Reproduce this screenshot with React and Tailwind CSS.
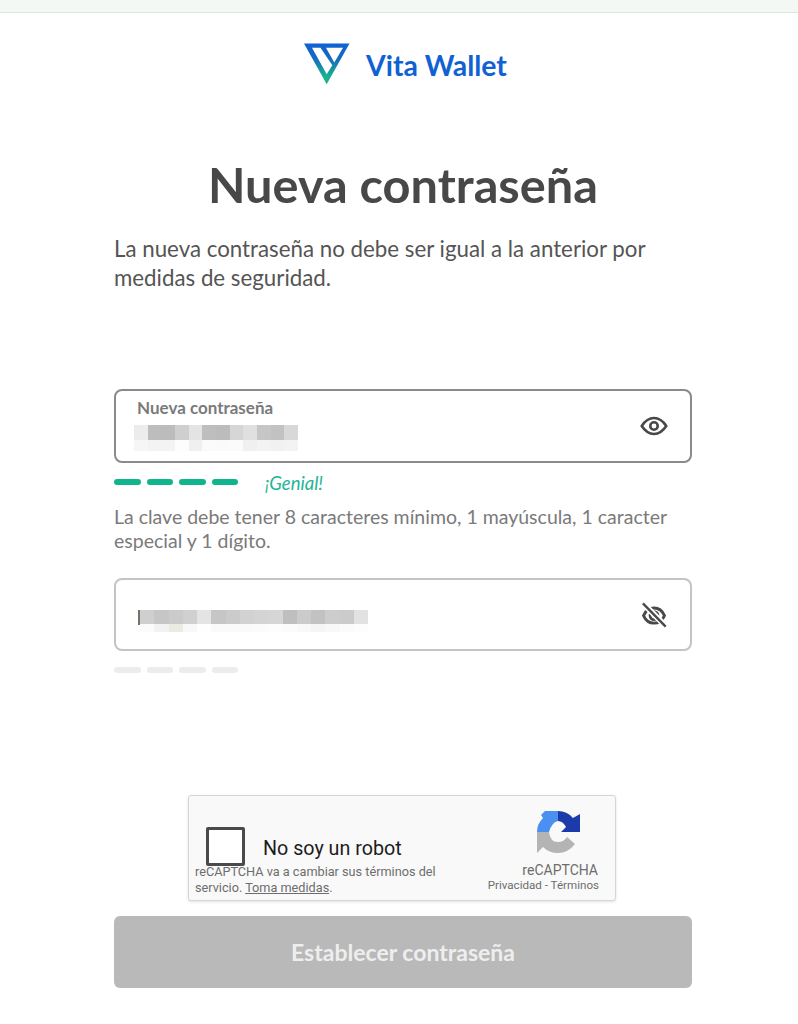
import React from "react";

const lato = "font-['Lato',sans-serif]";

const firstMosaic = [
  ["#ececec", "#bdbdbd", "#bcbcbc", "#cfcfcf", "#e4e4e4", "#bebebe", "#bcbcbc", "#d6d6d6", "#e0e0e0", "#c6c6c6", "#c2c2c2", "#d8d8d8"],
  ["#f6f6f6", "#f3f3f3", "#f3f3f3", "#fdfdfd", "#f0f0f0", "#fbfbfb", "#fafafa", "#fbfbfb", "#f0f0f0", "#f3f3f3", "#f1f1f1", "#f3f3f3"],
];

const secondMosaic = [
  ["#cfcfcf", "#c6c6c6", "#cbcbcb", "#d0d0d0", "#e4e4e4", "#c6c6c6", "#cbcbcb", "#d2d2d2", "#d4d4d4", "#d6d6d6", "#bfbfbf", "#cbcbcb", "#c2c2c2", "#cdcdcd", "#cbcbcb", "#e2e2e2"],
  ["#fbfbfb", "#f2f2f2", "#ebebe6", "#f8f8f8", "#fefefe", "#fafafa", "#fafafa", "#fafafa", "#fbfbfb", "#fdfdfd", "#fbfbfb", "#f8f8f8", "#f5f5f5", "#f8f8f8", "#fbfbfb", "#fdfdfd"],
];

const Mosaic = ({ rows, cellClass, topClass, bottomClass }) => (
  <div className="flex flex-col">
    {rows.map((row, i) => (
      <div key={i} className={`flex ${i === 0 ? topClass : bottomClass}`}>
        {row.map((color, j) => (
          <div key={j} className={cellClass} style={{ backgroundColor: color }} />
        ))}
      </div>
    ))}
  </div>
);

const Logo = () => (
  <svg width="46" height="42" viewBox="0 0 46 42" fill="none">
    <defs>
      <linearGradient id="logoGrad" x1="0" y1="0" x2="0" y2="1">
        <stop offset="0" stopColor="#1062d2" />
        <stop offset="0.35" stopColor="#1668c4" />
        <stop offset="0.8" stopColor="#19b08f" />
        <stop offset="1" stopColor="#19b58d" />
      </linearGradient>
    </defs>
    <path
      fill="url(#logoGrad)"
      fillRule="evenodd"
      d="M0 0.500H45.500L22.700 41.200ZM22 4.800H39L30.300 19.500ZM8 4.800H16.500L28.300 22.200L22.700 31.200Z"
    />
  </svg>
);

const EyeIcon = () => (
  <svg width="28" height="28" viewBox="0 0 24 24" fill="none" stroke="#484848" strokeWidth="2.200">
    <path d="M1.500 12C4.500 7.400 8 5.200 12 5.200S19.500 7.400 22.500 12C19.500 16.600 16 18.800 12 18.800S4.500 16.600 1.500 12Z" />
    <circle cx="12" cy="12" r="3.200" />
  </svg>
);

const EyeOffIcon = () => (
  <svg width="28" height="28" viewBox="0 0 24 24" fill="none" stroke="#484848" strokeWidth="2.400">
    <path d="M3 12.500C5 8 8.500 6 12 6S19 8 21 12.500C19 17 15.500 19 12 19S5 17 3 12.500Z" />
    <circle cx="12" cy="12.500" r="3.400" />
    <path d="M3 2.500L22 21.500" stroke="#ffffff" strokeWidth="5" />
    <path d="M2.500 2L22 22" strokeWidth="2" />
  </svg>
);

const RecaptchaIcon = () => (
  <svg width="44" height="44" viewBox="0 0 44 44">
    <path fill="#1c3aa9" d="M21 1Q30 1 36 8L43 4V22H24L29 17Q26 11 21 11Z" />
    <path fill="#4a90f0" d="M8 1H21V11Q15 12 12 22H0Q0 14 6 8L4 5Z" />
    <path fill="#b4b4b4" d="M0 22H12Q13 32 21 32Q27 32 30 27L38 34Q31 43 21 43Q12 43 6 37L0 43Z" />
  </svg>
);

const StrengthBar = ({ color }) => (
  <div className="flex gap-[6px]">
    <div className={`h-[6px] w-[26.500px] rounded-full ${color}`} />
    <div className={`h-[6px] w-[26.500px] rounded-full ${color}`} />
    <div className={`h-[6px] w-[26.500px] rounded-full ${color}`} />
    <div className={`h-[6px] w-[26.500px] rounded-full ${color}`} />
  </div>
);

export default function App() {
  return (
    <div className={`min-h-[1024px] bg-white ${lato}`}>
      <div className="h-[13px] border-b border-[#dfe6e1] bg-[#f3f8f5]" />

      <main className="ml-[114px] w-[578px]">
        <div className="mt-[29px] flex items-center justify-center gap-[16px] pl-[5px]">
          <div className="-mt-[2px]">
            <Logo />
          </div>
          <span className="text-[28.400px] font-bold leading-[46px] text-[#1062d2]">Vita Wallet</span>
        </div>

        <h1 className="mt-[61px] text-center text-[48.700px] font-bold leading-[70px] text-[#484848]">Nueva contraseña</h1>

        <p className="mt-[16px] text-[22.300px] leading-[28.500px] text-[#555555]">
          La nueva contraseña no debe ser igual a la anterior por medidas de seguridad.
        </p>

        <div className="mt-[97px] flex h-[74px] items-center justify-between rounded-[8px] border-2 border-[#8a8a8a] pl-[18px] pr-[22px]">
          <div className="flex flex-col self-start pt-[7px]">
            <span className="ml-[3px] text-[17px] font-bold leading-[20px] text-[#7a7a7a]">Nueva contraseña</span>
            <div className="mt-[7px]">
              <Mosaic rows={firstMosaic} cellClass="w-[13.670px]" topClass="h-[15px]" bottomClass="h-[11px]" />
            </div>
          </div>
          <EyeIcon />
        </div>

        <div className="mt-[12px] flex items-center gap-[27px]">
          <StrengthBar color="bg-[#11b48c]" />
          <span className="mt-[3px] text-[18.500px] italic leading-[10px] text-[#23b594]">¡Genial!</span>
        </div>

        <p className="mt-[17px] text-[19.500px] leading-[24px] text-[#7a7a7a]">
          La clave debe tener 8 caracteres mínimo, 1 mayúscula, 1 caracter especial y 1 dígito.
        </p>

        <div className="mt-[25px] flex h-[73px] items-center justify-between rounded-[8px] border-2 border-[#c4c4c4] pl-[22px] pr-[22px]">
          <div className="flex items-start pt-[12px]">
            <div className="h-[15px] w-[2px] bg-[#77736a]" />
            <Mosaic rows={secondMosaic} cellClass="w-[14.250px]" topClass="h-[14px]" bottomClass="h-[8px]" />
          </div>
          <EyeOffIcon />
        </div>

        <div className="mt-[16px]">
          <StrengthBar color="bg-[#ececec]" />
        </div>

        <div className="ml-[74px] mt-[122px] flex h-[106px] w-[428px] rounded-[3px] border border-[#d6d6d6] bg-[#f9f9f9] shadow-[0_1px_3px_rgba(0,0,0,0.12)] font-['Roboto',sans-serif]">
          <div className="flex flex-1 flex-col pl-[6px]">
            <div className="mt-[31px] flex items-center pl-[11px]">
              <div className="h-[39px] w-[39px] rounded-[2px] border-[3px] border-[#4a4a4a] bg-white" />
              <span className="ml-[18px] pt-[5px] text-[19.700px] leading-[28px] text-[#1c1c1c]">No soy un robot</span>
            </div>
            <p className="mt-[-2px] text-[12.700px] leading-[16px] text-[#6d6d6d]">
              reCAPTCHA va a cambiar sus términos del servicio. <span className="underline">Toma medidas</span>.
            </p>
          </div>
          <div className="flex w-[139px] flex-col items-end pr-[16px] pt-[14px]">
            <div className="mr-[18px]">
              <RecaptchaIcon />
            </div>
            <span className="mr-[1px] mt-[8px] text-[14px] leading-[16px] text-[#6d6d6d]">reCAPTCHA</span>
            <span className="whitespace-nowrap text-[11.600px] leading-[15px] text-[#6d6d6d]">Privacidad - Términos</span>
          </div>
        </div>

        <button className="mt-[15px] h-[72px] w-full rounded-[6px] bg-[#b9b9b9] text-[23px] font-bold text-[#eeeeee]">
          Establecer contraseña
        </button>
      </main>
    </div>
  );
}
